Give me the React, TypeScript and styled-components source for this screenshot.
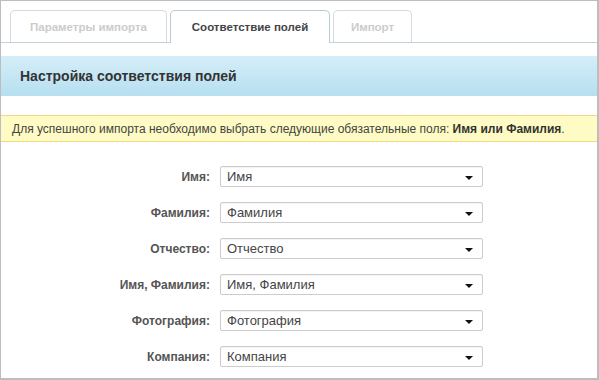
import React from "react";
import styled, { createGlobalStyle } from "styled-components";

const GlobalStyle = createGlobalStyle`
  html, body {
    margin: 0;
    padding: 0;
    background: #ffffff;
  }
  * {
    box-sizing: border-box;
  }
`;

const Frame = styled.div`
  width: 599px;
  height: 380px;
  border: 1px solid #bdbdbd;
  border-right-width: 2px;
  border-bottom-width: 2px;
  overflow: hidden;
  font-family: "Liberation Sans", Arial, sans-serif;
  background: #ffffff;
`;

const TabBar = styled.div`
  display: flex;
  gap: 3px;
  padding: 9px 0 0 9px;
  height: 42px;
  border-bottom: 1px solid #c3d2da;
`;

interface ITabProps {
  active?: boolean;
  width: number;
}

const Tab = styled.div<ITabProps>`
  width: ${props => props.width}px;
  height: ${props => (props.active ? 33 : 32)}px;
  display: flex;
  align-items: center;
  justify-content: center;
  font-size: 11.5px;
  font-weight: bold;
  color: ${props => (props.active ? "#444444" : "#cccccc")};
  background: #ffffff;
  border: 1px solid ${props => (props.active ? "#b9cbd4" : "#d5dadd")};
  border-bottom: none;
  border-radius: 5px 5px 0 0;
  position: relative;
  z-index: 1;
`;

const SectionHeader = styled.div`
  margin-top: 13px;
  height: 40px;
  padding-left: 19px;
  display: flex;
  align-items: center;
  font-size: 14px;
  font-weight: bold;
  color: #333333;
  background: linear-gradient(to bottom, #d5eef8, #b6dff0);
`;

const Notice = styled.div`
  margin-top: 19px;
  height: 27px;
  padding-left: 11px;
  display: flex;
  align-items: center;
  font-size: 12px;
  color: #444444;
  background: #fffbc4;
  border-top: 1px solid #f6d682;
  border-bottom: 1px solid #f6d682;
  b {
    color: #333333;
  }
`;

const Form = styled.div`
  display: grid;
  grid-template-columns: 209px 263px;
  column-gap: 10px;
  row-gap: 15px;
  align-items: center;
  margin-top: 24px;
`;

const Label = styled.label`
  text-align: right;
  font-size: 12px;
  font-weight: bold;
  color: #555555;
`;

const Select = styled.div`
  height: 21px;
  padding: 0 9px 0 6px;
  display: flex;
  align-items: center;
  justify-content: space-between;
  border: 1px solid #cccccc;
  border-radius: 2px;
  box-shadow: inset 0 1px 1px rgba(0, 0, 0, 0.05);
  font-size: 13px;
  color: #444444;
  background: #ffffff;
`;

const Caret = styled.span`
  width: 0;
  height: 0;
  border-left: 4px solid transparent;
  border-right: 4px solid transparent;
  border-top: 4px solid #111111;
  margin-top: 2px;
`;

const FIELDS = [
  "Имя",
  "Фамилия",
  "Отчество",
  "Имя, Фамилия",
  "Фотография",
  "Компания"
];

const App = () => (
  <>
    <GlobalStyle />
    <Frame>
      <TabBar>
        <Tab width={157}>Параметры импорта</Tab>
        <Tab width={160} active>
          Соответствие полей
        </Tab>
        <Tab width={79}>Импорт</Tab>
      </TabBar>
      <SectionHeader>Настройка соответствия полей</SectionHeader>
      <Notice>
        Для успешного импорта необходимо выбрать следующие обязательные поля:&nbsp;
        <b>Имя или Фамилия</b>.
      </Notice>
      <Form>
        {FIELDS.map(field => (
          <React.Fragment key={field}>
            <Label>{field}:</Label>
            <Select>
              <span>{field}</span>
              <Caret />
            </Select>
          </React.Fragment>
        ))}
      </Form>
    </Frame>
  </>
);

export default App;
